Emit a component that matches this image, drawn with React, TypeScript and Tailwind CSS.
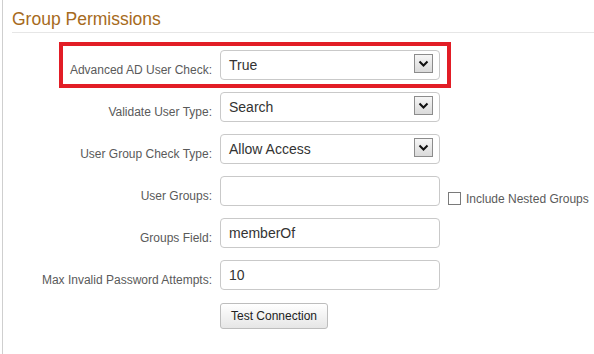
import React from "react";

const Arrow = () => (
  <div className="w-[19px] h-[19px] mb-[3px] border border-[#8c8c8c] bg-linear-to-b from-[#f6f6f6] to-[#dadada] flex items-center justify-center">
    <svg width="11" height="8" viewBox="0 0 11 8">
      <path d="M1.5 1.5 L5.5 5.5 L9.5 1.5" fill="none" stroke="#111" strokeWidth="2" />
    </svg>
  </div>
);

const Select = ({ value }: { value: string }) => (
  <div className="w-[220px] h-[30px] border border-[#c9c9c9] rounded-[4px] bg-white flex items-center justify-between pl-[8px] pr-[6px] text-[14px] text-[#333]">
    <span>{value}</span>
    <Arrow />
  </div>
);

const Input = ({ value }: { value?: string }) => (
  <div className="w-[220px] h-[30px] border border-[#c9c9c9] rounded-[4px] bg-white flex items-center pl-[8px] text-[14px] text-[#333]">
    <span>{value}</span>
  </div>
);

const Row = ({
  label,
  children,
  extra,
}: {
  label: string;
  children: React.ReactNode;
  extra?: React.ReactNode;
}) => (
  <div className="flex h-[30px]">
    <div className="w-[209px] shrink-0 text-right text-[12px] leading-[14px] pt-[13px] text-[#5a5a5a]">
      {label}
    </div>
    <div className="ml-[8px] shrink-0">{children}</div>
    {extra}
  </div>
);

export default function App() {
  return (
    <div
      className="w-[594px] h-[354px] bg-white overflow-hidden pl-[2px]"
      style={{ fontFamily: '"Liberation Sans", Arial, sans-serif' }}
    >
      <div className="h-full border-l border-[#cfcfcf]">
        <div className="ml-[9px] pt-[9px] pb-[3px] border-b border-[#e6e6e6] text-[17.5px] leading-[20px] text-[#a66a20]">
          Group Permissions
        </div>
        <div className="relative mt-[17px] flex flex-col gap-[12px]">
          <div className="absolute left-[56px] top-[-8px] w-[392px] h-[46px] border-4 border-[#e21d26] pointer-events-none" />
          <Row label="Advanced AD User Check:">
            <Select value="True" />
          </Row>
          <Row label="Validate User Type:">
            <Select value="Search" />
          </Row>
          <Row label="User Group Check Type:">
            <Select value="Allow Access" />
          </Row>
          <Row
            label="User Groups:"
            extra={
              <div className="ml-[8px] flex items-center pt-[15px] text-[12px] leading-[14px] text-[#5a5a5a]">
                <div className="w-[13px] h-[13px] border border-[#7a7a7a] bg-white mr-[5px]" />
                <span>Include Nested Groups</span>
              </div>
            }
          >
            <Input />
          </Row>
          <Row label="Groups Field:">
            <Input value="memberOf" />
          </Row>
          <Row label="Max Invalid Password Attempts:">
            <Input value="10" />
          </Row>
          <div className="flex pt-[1px]">
            <div className="w-[209px] shrink-0" />
            <div className="ml-[8px] w-[108px] h-[26px] border border-[#bdbdbd] rounded-[3px] bg-linear-to-b from-[#ffffff] to-[#e6e6e6] flex items-center justify-center text-[12px] text-[#222]">
              Test Connection
            </div>
          </div>
        </div>
      </div>
    </div>
  );
}
